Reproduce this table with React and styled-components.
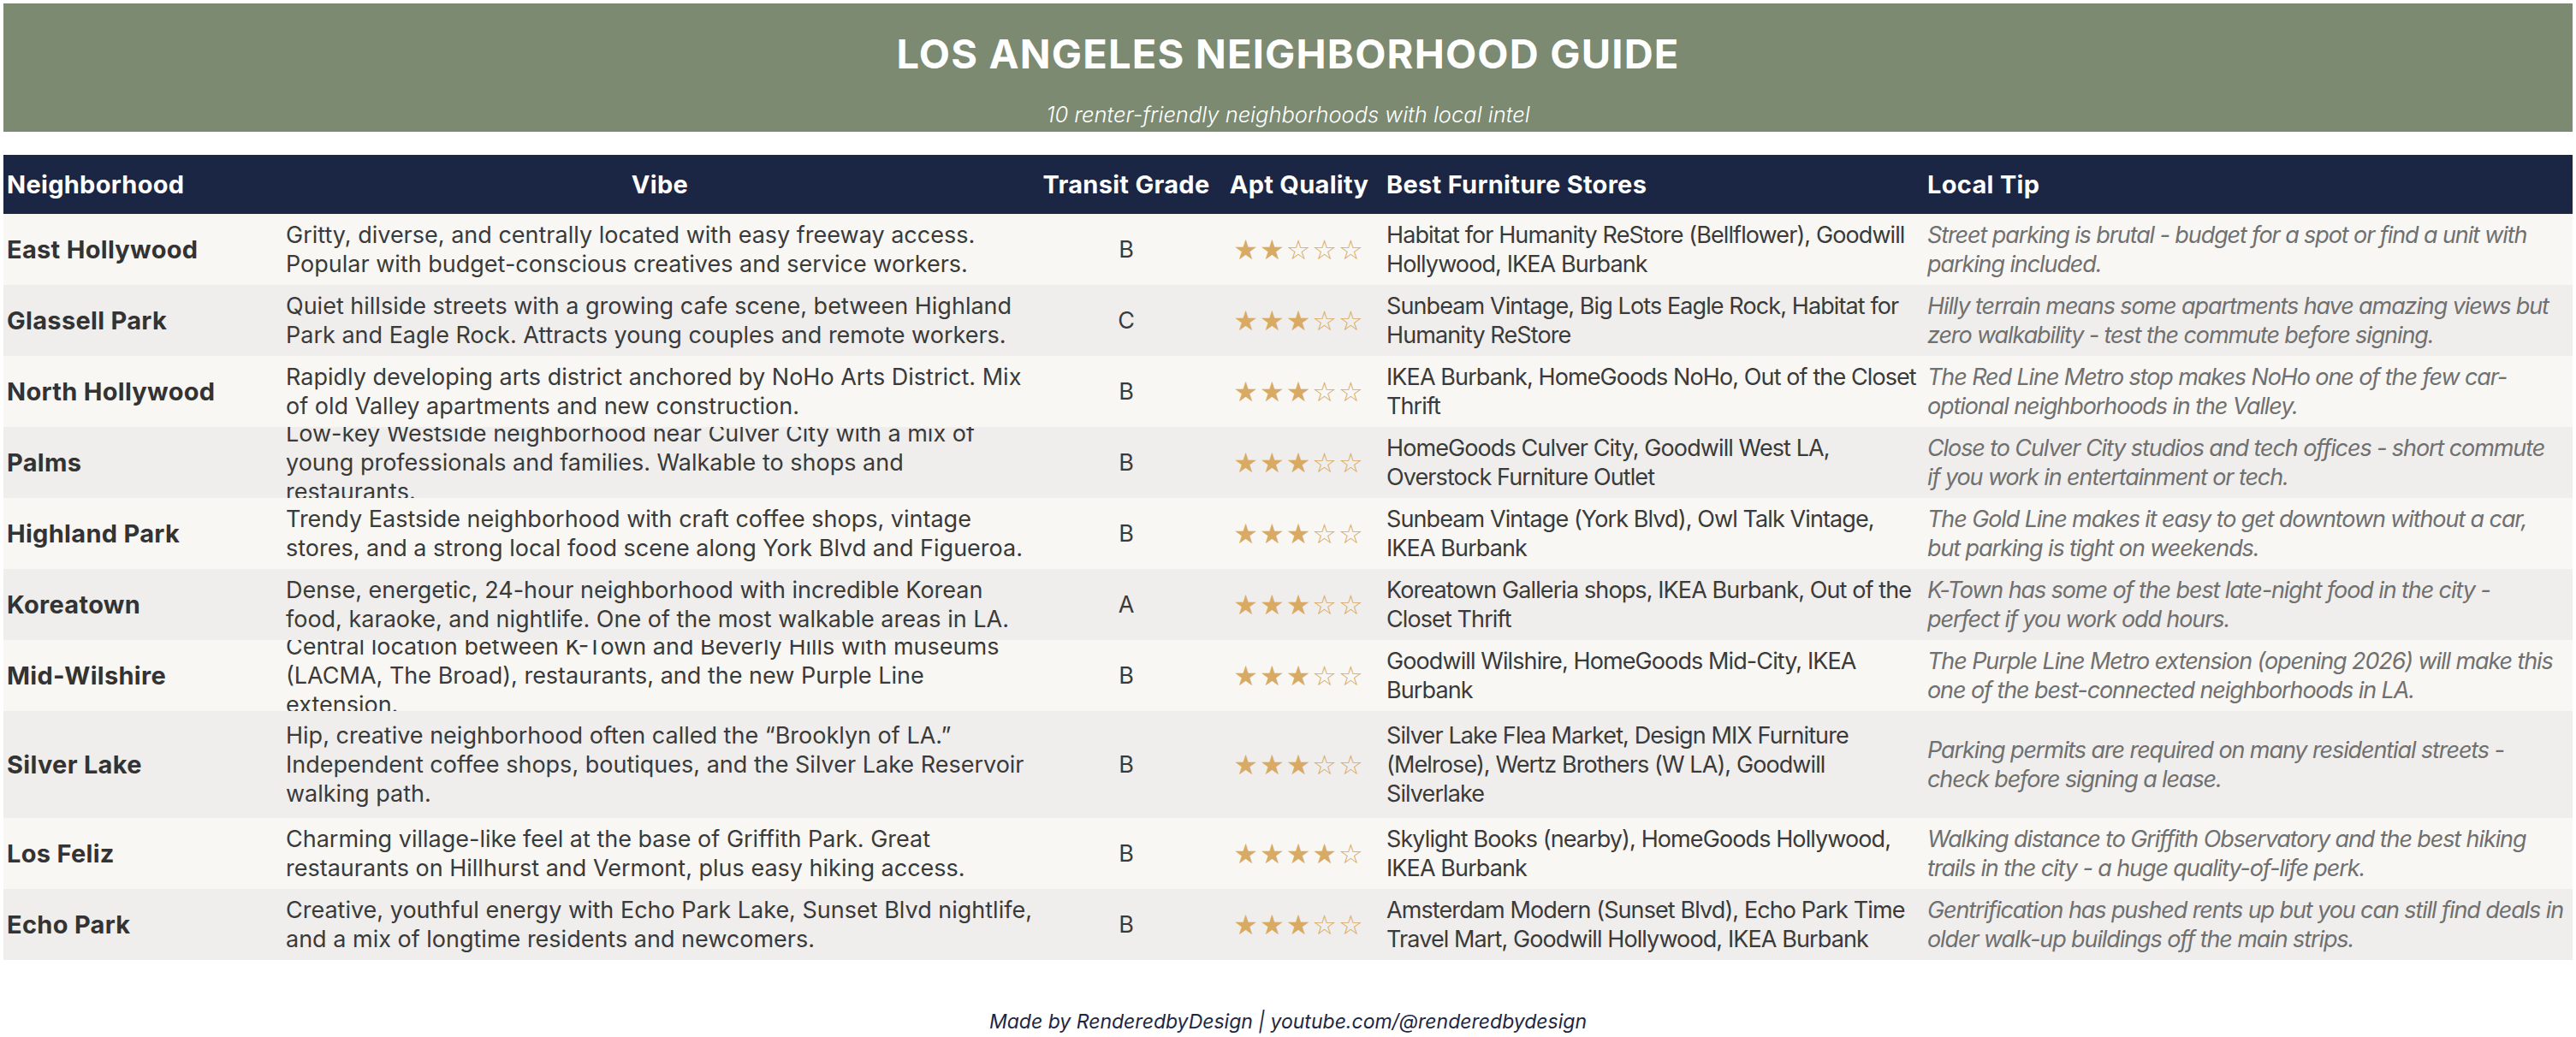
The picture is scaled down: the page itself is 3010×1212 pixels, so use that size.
import React from 'react'
import styled, { createGlobalStyle } from 'styled-components'

const GlobalStyle = createGlobalStyle`
    body {
        margin: 0;
        background: #fff;
        font-family: Inter, "Liberation Sans", sans-serif;
    }
`

// tips keep the reference's own line breaks
const neighborhoods = [
    {
        name: 'East Hollywood',
        vibe: 'Gritty, diverse, and centrally located with easy freeway access. Popular with budget-conscious creatives and service workers.',
        transit: 'B',
        stars: 2,
        stores: 'Habitat for Humanity ReStore (Bellflower), Goodwill Hollywood, IKEA Burbank',
        tip: ['Street parking is brutal - budget for a spot or find a unit with', 'parking included.']
    },
    {
        name: 'Glassell Park',
        vibe: 'Quiet hillside streets with a growing cafe scene, between Highland Park and Eagle Rock. Attracts young couples and remote workers.',
        transit: 'C',
        stars: 3,
        stores: 'Sunbeam Vintage, Big Lots Eagle Rock, Habitat for Humanity ReStore',
        tip: ['Hilly terrain means some apartments have amazing views but', 'zero walkability - test the commute before signing.']
    },
    {
        name: 'North Hollywood',
        vibe: 'Rapidly developing arts district anchored by NoHo Arts District. Mix of old Valley apartments and new construction.',
        transit: 'B',
        stars: 3,
        stores: 'IKEA Burbank, HomeGoods NoHo, Out of the Closet Thrift',
        tip: ['The Red Line Metro stop makes NoHo one of the few car-', 'optional neighborhoods in the Valley.']
    },
    {
        name: 'Palms',
        vibe: 'Low-key Westside neighborhood near Culver City with a mix of young professionals and families. Walkable to shops and restaurants.',
        transit: 'B',
        stars: 3,
        stores: 'HomeGoods Culver City, Goodwill West LA, Overstock Furniture Outlet',
        tip: ['Close to Culver City studios and tech offices - short commute', 'if you work in entertainment or tech.']
    },
    {
        name: 'Highland Park',
        vibe: 'Trendy Eastside neighborhood with craft coffee shops, vintage stores, and a strong local food scene along York Blvd and Figueroa.',
        transit: 'B',
        stars: 3,
        stores: 'Sunbeam Vintage (York Blvd), Owl Talk Vintage, IKEA Burbank',
        tip: ['The Gold Line makes it easy to get downtown without a car,', 'but parking is tight on weekends.']
    },
    {
        name: 'Koreatown',
        vibe: 'Dense, energetic, 24-hour neighborhood with incredible Korean food, karaoke, and nightlife. One of the most walkable areas in LA.',
        transit: 'A',
        stars: 3,
        stores: 'Koreatown Galleria shops, IKEA Burbank, Out of the Closet Thrift',
        tip: ['K-Town has some of the best late-night food in the city -', 'perfect if you work odd hours.']
    },
    {
        name: 'Mid-Wilshire',
        vibe: 'Central location between K-Town and Beverly Hills with museums (LACMA, The Broad), restaurants, and the new Purple Line extension.',
        transit: 'B',
        stars: 3,
        stores: 'Goodwill Wilshire, HomeGoods Mid-City, IKEA Burbank',
        tip: ['The Purple Line Metro extension (opening 2026) will make this', 'one of the best-connected neighborhoods in LA.']
    },
    {
        name: 'Silver Lake',
        vibe: 'Hip, creative neighborhood often called the \u201CBrooklyn of LA.\u201D Independent coffee shops, boutiques, and the Silver Lake Reservoir walking path.',
        transit: 'B',
        stars: 3,
        stores: 'Silver Lake Flea Market, Design MIX Furniture (Melrose), Wertz Brothers (W LA), Goodwill Silverlake',
        tip: ['Parking permits are required on many residential streets -', 'check before signing a lease.'],
        tall: true
    },
    {
        name: 'Los Feliz',
        vibe: 'Charming village-like feel at the base of Griffith Park. Great restaurants on Hillhurst and Vermont, plus easy hiking access.',
        transit: 'B',
        stars: 4,
        stores: 'Skylight Books (nearby), HomeGoods Hollywood, IKEA Burbank',
        tip: ['Walking distance to Griffith Observatory and the best hiking', 'trails in the city - a huge quality-of-life perk.']
    },
    {
        name: 'Echo Park',
        vibe: 'Creative, youthful energy with Echo Park Lake, Sunset Blvd nightlife, and a mix of longtime residents and newcomers.',
        transit: 'B',
        stars: 3,
        stores: 'Amsterdam Modern (Sunset Blvd), Echo Park Time Travel Mart, Goodwill Hollywood, IKEA Burbank',
        tip: ['Gentrification has pushed rents up but you can still find deals in', 'older walk-up buildings off the main strips.']
    }
]

const Stars = ({ count }) => (
    <StarRow>
        {[0, 1, 2, 3, 4].map(i => (i < count ? '\u2605' : '\u2606')).join('')}
    </StarRow>
)

const App = () => (
    <Page>
        <GlobalStyle />
        <Banner>
            <Title>LOS ANGELES NEIGHBORHOOD GUIDE</Title>
            <Subtitle>10 renter-friendly neighborhoods with local intel</Subtitle>
        </Banner>

        <Table>
            <HeadRow>
                <HeadCell>Neighborhood</HeadCell>
                <HeadCell $center>Vibe</HeadCell>
                <HeadCell $center>Transit Grade</HeadCell>
                <HeadCell $center>Apt Quality</HeadCell>
                <HeadCell>Best Furniture Stores</HeadCell>
                <HeadCell>Local Tip</HeadCell>
            </HeadRow>

            {neighborhoods.map((n, index) => (
                <Row key={n.name} $odd={index % 2 === 1} $tall={n.tall}>
                    <NameCell>{n.name}</NameCell>
                    <TextCell>{n.vibe}</TextCell>
                    <GradeCell>{n.transit}</GradeCell>
                    <GradeCell><Stars count={n.stars} /></GradeCell>
                    <StoreCell>{n.stores}</StoreCell>
                    <TipCell>
                        {n.tip.map(line => <TipLine key={line}>{line}</TipLine>)}
                    </TipCell>
                </Row>
            ))}
        </Table>

        <Footer>Made by RenderedbyDesign | youtube.com/@renderedbydesign</Footer>
    </Page>
)

export default App


const columns = '326px 882px 208px 196px 632px 758px'

const Page = styled.div`
    padding: 4px;
    width: 3002px;
`

const Banner = styled.header`
    height: 150px;
    background: #7b8a70;
    display: flex;
    flex-direction: column;
    align-items: center;
    padding-top: 34px;
    box-sizing: border-box;
    color: #fff;
`

const Title = styled.h1`
    margin: 0;
    font-size: 47px;
    line-height: 50px;
    font-weight: 700;
    letter-spacing: 1.2px;
`

const Subtitle = styled.p`
    margin: 31px 0 0;
    font-size: 25.5px;
    line-height: 30px;
    font-weight: 300;
    font-style: italic;
`

const Table = styled.div`
    margin-top: 27px;
    display: flex;
    flex-direction: column;
`

const HeadRow = styled.div`
    display: grid;
    grid-template-columns: ${columns};
    height: 69px;
    background: #1b2644;
`

const HeadCell = styled.div`
    display: flex;
    align-items: center;
    justify-content: ${p => (p.$center ? 'center' : 'flex-start')};
    padding: 0 4px;
    color: #fff;
    font-size: 29px;
    font-weight: 700;
    letter-spacing: 0.3px;
    white-space: nowrap;
`

const Row = styled.div`
    display: grid;
    grid-template-columns: ${columns};
    height: ${p => (p.$tall ? '125px' : '83px')};
    background: ${p => (p.$odd ? '#efeeec' : '#f8f7f4')};
`

const Cell = styled.div`
    display: flex;
    align-items: center;
    padding: 0 4px;
    overflow: hidden;
    color: #3a3a3a;
    font-size: 27px;
    line-height: 34px;
`

const NameCell = styled(Cell)`
    font-size: 29px;
    font-weight: 700;
    letter-spacing: 0.3px;
    color: #333;
`

const TextCell = styled(Cell)``

const StoreCell = styled(Cell)`
    letter-spacing: -0.9px;
`

const TipCell = styled(Cell)`
    flex-direction: column;
    align-items: flex-start;
    justify-content: center;
    padding-right: 0;
    font-style: italic;
    letter-spacing: -1.1px;
    color: #707070;
`

const TipLine = styled.span`
    white-space: nowrap;
`

const GradeCell = styled(Cell)`
    justify-content: center;
`

const StarRow = styled.span`
    font-family: "DejaVu Sans", sans-serif;
    font-size: 32px;
    letter-spacing: 2px;
    color: #d8aa63;
`

const Footer = styled.footer`
    margin-top: 57px;
    text-align: center;
    font-size: 23px;
    line-height: 30px;
    font-style: italic;
    color: #1b2644;
`
